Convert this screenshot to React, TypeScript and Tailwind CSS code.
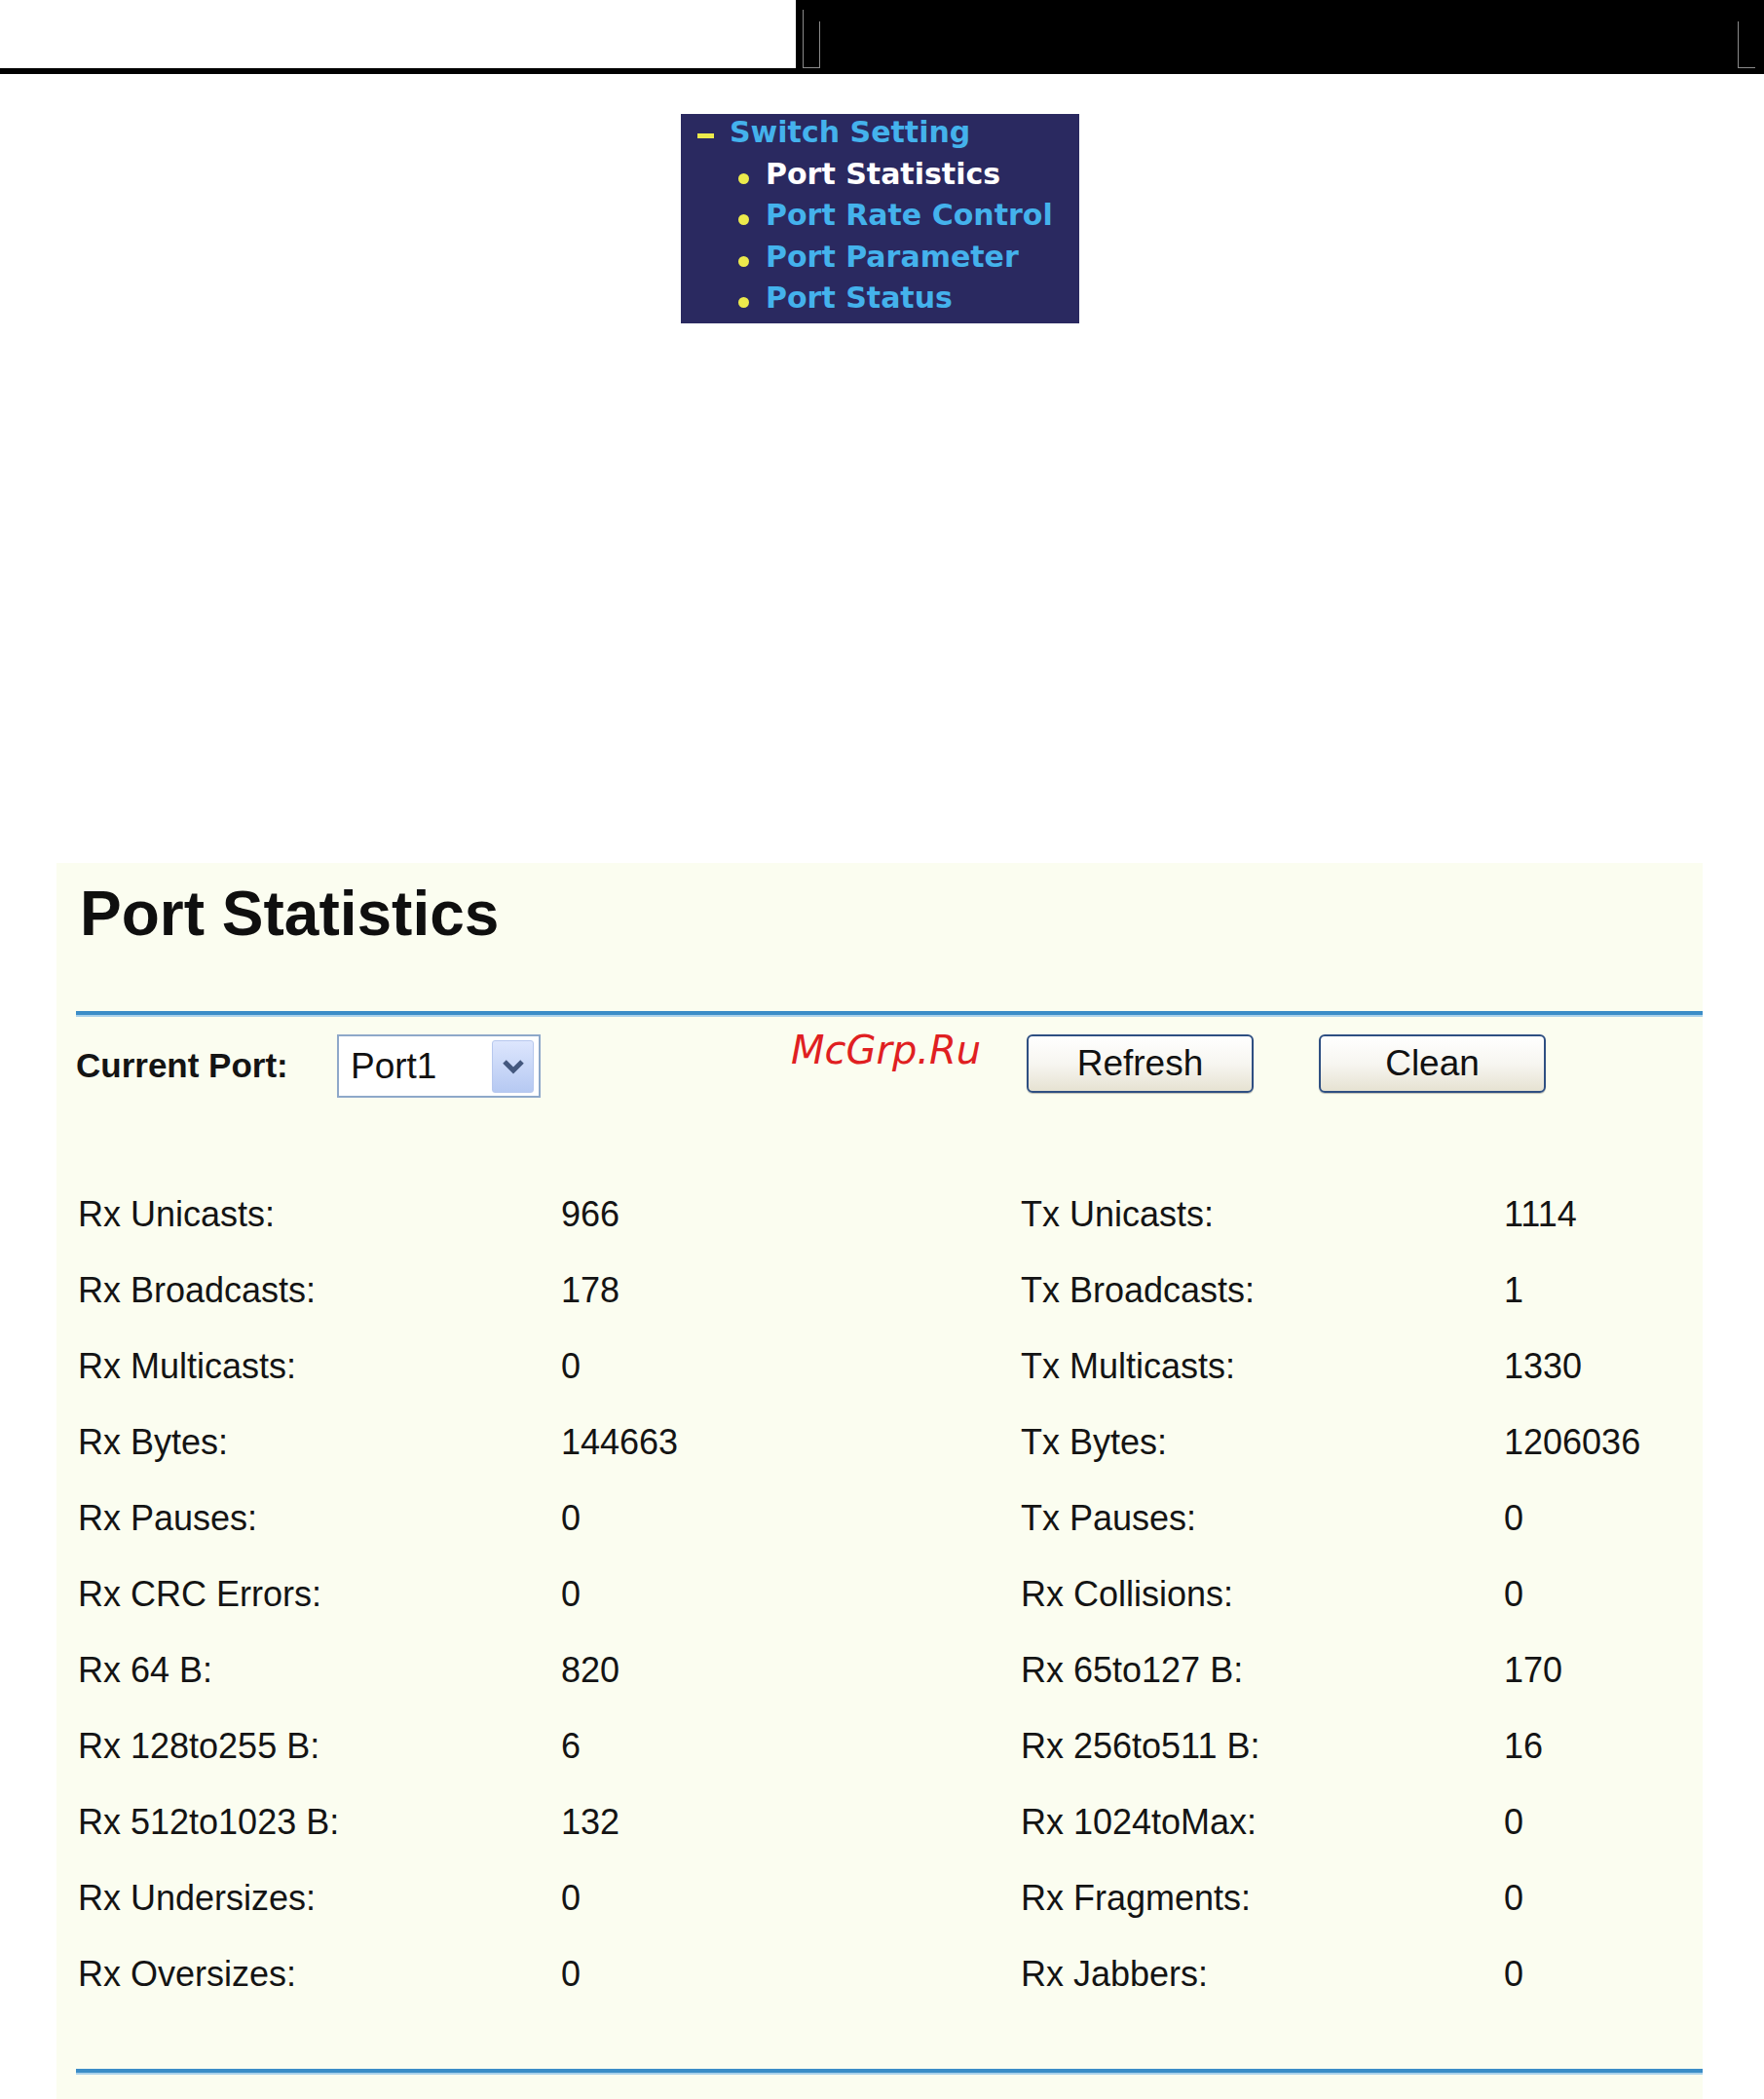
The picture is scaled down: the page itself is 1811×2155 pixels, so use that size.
import type { ReactNode } from "react";

const rows: Array<[string, string, string, string]> = [
  ["Rx Unicasts:", "966", "Tx Unicasts:", "1114"],
  ["Rx Broadcasts:", "178", "Tx Broadcasts:", "1"],
  ["Rx Multicasts:", "0", "Tx Multicasts:", "1330"],
  ["Rx Bytes:", "144663", "Tx Bytes:", "1206036"],
  ["Rx Pauses:", "0", "Tx Pauses:", "0"],
  ["Rx CRC Errors:", "0", "Rx Collisions:", "0"],
  ["Rx 64 B:", "820", "Rx 65to127 B:", "170"],
  ["Rx 128to255 B:", "6", "Rx 256to511 B:", "16"],
  ["Rx 512to1023 B:", "132", "Rx 1024toMax:", "0"],
  ["Rx Undersizes:", "0", "Rx Fragments:", "0"],
  ["Rx Oversizes:", "0", "Rx Jabbers:", "0"],
];

const menu = [
  { label: "Port Statistics", active: true },
  { label: "Port Rate Control", active: false },
  { label: "Port Parameter", active: false },
  { label: "Port Status", active: false },
];

export default function App() {
  return (
    <div className="h-[2155px] w-[1811px] overflow-hidden bg-white">
      <Header />
      <Menu />
      <PortStatistics />
    </div>
  );
}

function Header() {
  return (
    <div className="relative h-[76px] bg-black">
      <div className="h-[70px] w-[817px] bg-white" />
      {/* little grey frame marks left over in the black bar */}
      <div className="absolute left-[824px] top-[10px] h-[60px] w-px bg-[#8a8a8a]" />
      <div className="absolute left-[841px] top-[22px] h-[48px] w-px bg-[#8a8a8a]" />
      <div className="absolute left-[824px] top-[69px] h-px w-[18px] bg-[#8a8a8a]" />
      <div className="absolute left-[1784px] top-[22px] h-[48px] w-px bg-[#8a8a8a]" />
      <div className="absolute left-[1784px] top-[69px] h-px w-[18px] bg-[#8a8a8a]" />
    </div>
  );
}

function Menu() {
  return (
    <div className="ml-[699px] mt-[41px] flow-root h-[215px] w-[409px] bg-[#2a2960] font-['DejaVu_Sans',sans-serif] text-[30px] font-bold">
      <ul className="-mt-[2px]">
        <li className="flex h-[42.5px] items-start leading-[42.5px] text-[#44b2ec]">
          <span className="ml-[17px] mt-[22px] h-[5px] w-[17px] bg-[#ecea4c]" />
          <span className="ml-[16px]">Switch Setting</span>
        </li>
        {menu.map((m) => (
          <li key={m.label} className="flex h-[42.5px] items-start leading-[42.5px]">
            <span className="ml-[59px] mt-[20px] h-[11px] w-[11px] rounded-full bg-[#ecea4c]" />
            <span className={m.active ? "ml-[17px] text-white" : "ml-[17px] text-[#44b2ec]"}>{m.label}</span>
          </li>
        ))}
      </ul>
    </div>
  );
}

function Rule() {
  return (
    <div className="ml-[20px]">
      <div className="h-[4px] bg-[#3b8dc7]" />
      <div className="h-[2px] bg-[#a9d1ea]" />
    </div>
  );
}

function XpButton({ children }: { children: ReactNode }) {
  return (
    <button className="flex h-[60px] w-[233px] items-center justify-center rounded-[6px] border-2 border-[#2e4f82] bg-linear-to-b from-white via-[#f7f6f1] to-[#e6e2d2] text-[37px] text-[#111] shadow-[0_1px_1px_rgba(0,0,0,0.25)]">
      {children}
    </button>
  );
}

function PortStatistics() {
  return (
    <div className="ml-[58px] mt-[554px] flow-root h-[1269px] w-[1690px] bg-[#fbfdf0] font-['Liberation_Sans',Arial,sans-serif] text-[#141414]">
      <h1 className="pl-[24px] pt-[20px] text-[64px] font-bold leading-[64px] text-[#0f0f0f]">Port Statistics</h1>

      <div className="mt-[68px]">
        <Rule />
      </div>

      <div className="mt-[18px] flex h-[65px] items-start pl-[20px]">
        <div className="flex h-[65px] w-[268px] items-center text-[35px] font-bold">Current Port:</div>
        <div className="flex h-[65px] w-[209px] items-center border-2 border-[#8ea8c9] bg-white pl-[12px]">
          <span className="text-[37px] leading-none text-[#111]">Port1</span>
          <span className="ml-auto mr-[5px] flex h-[54px] w-[43px] items-center justify-center rounded-[3px] border border-[#b7c8ee] bg-linear-to-b from-[#dde6fd] to-[#b6c9f2]">
            <svg viewBox="0 0 24 18" className="h-[18px] w-[24px]" fill="none" stroke="#44587e" strokeWidth="5">
              <path d="M3 4 12 13 21 4" strokeLinejoin="miter" />
            </svg>
          </span>
        </div>
        <div className="-mt-[4px] ml-[257px] w-[242px] font-['DejaVu_Sans',sans-serif] text-[40px] italic leading-[40px] text-[#e01f22]">
          McGrp.Ru
        </div>
        <XpButton>Refresh</XpButton>
        <div className="ml-[67px]">
          <XpButton>Clean</XpButton>
        </div>
      </div>

      <div className="mt-[81px] grid grid-cols-[496px_472px_496px_1fr] pl-[22px] text-[36px] leading-[78px]">
        {rows.map(([a, b, c, d]) => (
          <div key={a} className="contents">
            <div className="h-[78px]">{a}</div>
            <div className="h-[78px]">{b}</div>
            <div className="h-[78px]">{c}</div>
            <div className="h-[78px]">{d}</div>
          </div>
        ))}
      </div>

      <div className="mt-[58px]">
        <Rule />
      </div>
    </div>
  );
}
